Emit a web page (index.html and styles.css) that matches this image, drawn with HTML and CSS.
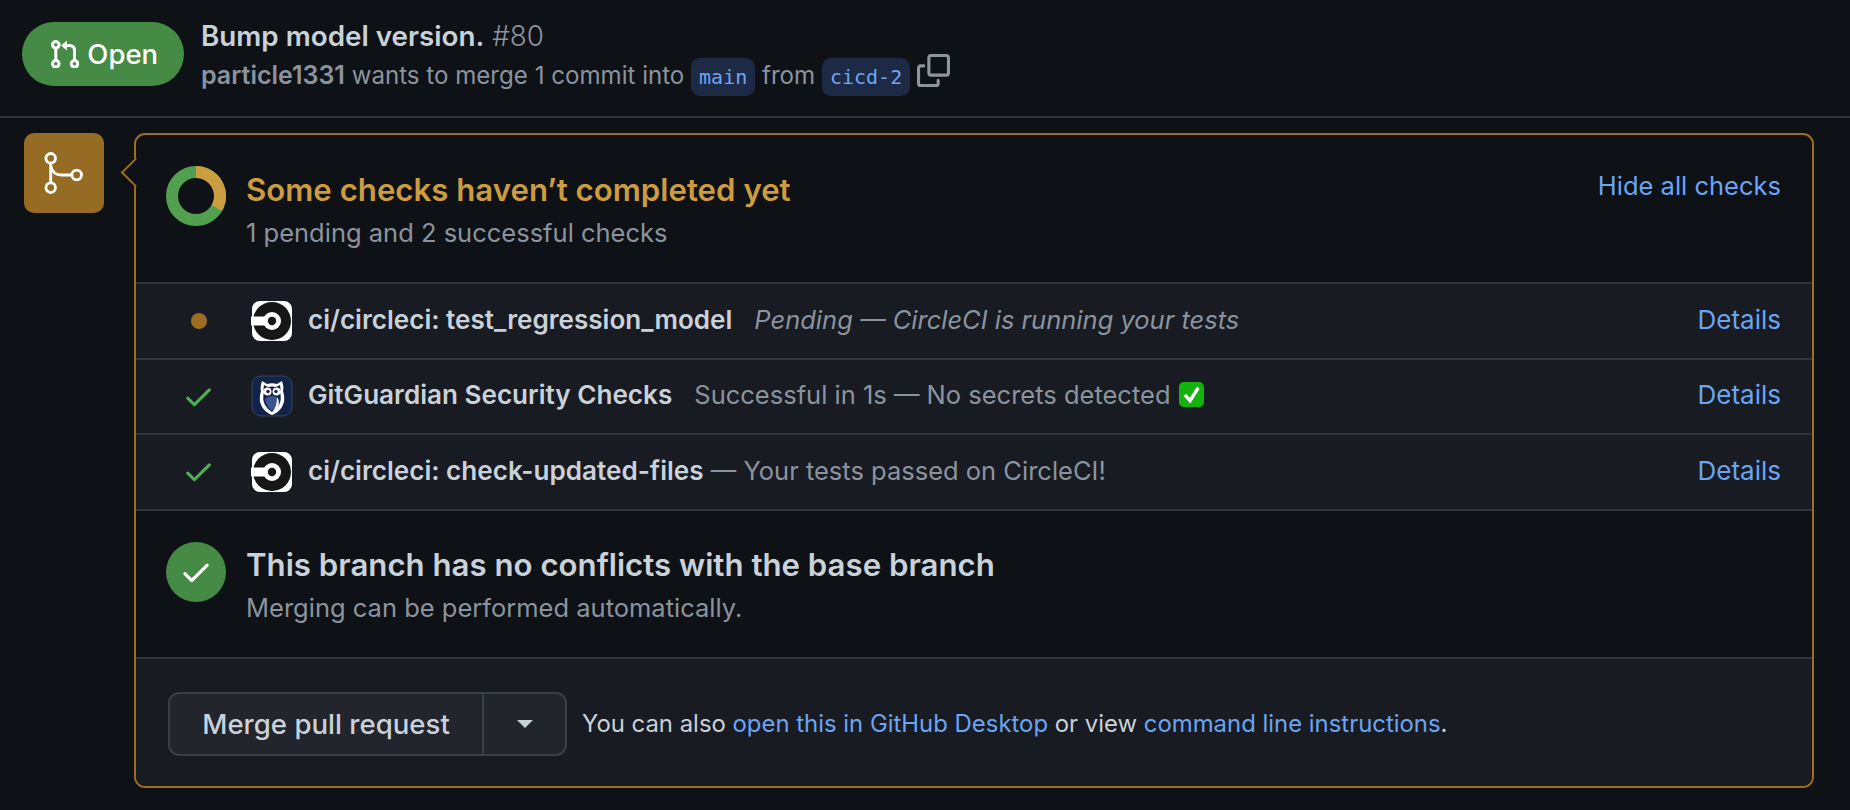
FILE: index.html
```html
<!DOCTYPE html>
<html lang="en">
<head>
  <meta charset="UTF-8">
  <title>Bump model version. #80</title>
  <link rel="stylesheet" href="styles.css">
</head>
<body>
<svg class="defs" width="0" height="0">
  <symbol id="check" viewBox="0 0 16 16"><path fill-rule="evenodd" d="M13.78 4.22a.75.75 0 0 1 0 1.06l-7.25 7.25a.75.75 0 0 1-1.06 0L2.22 9.28a.751.751 0 0 1 .018-1.042.751.751 0 0 1 1.042-.018L6 10.94l6.72-6.72a.75.75 0 0 1 1.06 0Z"/></symbol>
  <symbol id="circleci" viewBox="0 0 42 42">
    <rect x="1" y="1" width="40" height="40" rx="8" fill="#fff"/>
    <circle cx="21" cy="21" r="19" fill="#161616"/>
    <rect x="0" y="16.500" width="15" height="9" fill="#fff"/>
    <circle cx="21" cy="21" r="9" fill="#fff"/>
    <circle cx="21" cy="21" r="4.200" fill="#161616"/>
  </symbol>
</svg>
<header class="pr-header">
  <div class="state-badge">
    <svg class="state-icon" viewBox="9.500 9.500 28.500 28.500">
      <circle cx="14.300" cy="14.300" r="3.300"/>
      <circle cx="14.300" cy="33.300" r="3.300"/>
      <circle cx="33" cy="33.300" r="3.300"/>
      <path d="M14.300 18v11.500M33 29.500V20q0-5-5-5h-4"/>
      <path class="arrow-head" d="M25.500 10L19.500 15l6 5z"/>
    </svg>
    <span>Open</span>
  </div>
  <div class="pr-meta">
    <div class="pr-title"><strong>Bump model version.</strong> <span class="pr-number">#80</span></div>
    <div class="pr-sub">
      <strong>particle1331</strong> wants to merge 1 commit into <code class="branch">main</code> from <code class="branch">cicd-2</code>
      <svg class="copy-icon" viewBox="0 0 16 16"><path d="M0 6.75C0 5.784.784 5 1.75 5h1.5a.75.75 0 0 1 0 1.5h-1.5a.25.25 0 0 0-.25.25v7.5c0 .138.112.25.25.25h7.5a.25.25 0 0 0 .25-.25v-1.5a.75.75 0 0 1 1.5 0v1.5A1.75 1.75 0 0 1 9.25 16h-7.5A1.75 1.75 0 0 1 0 14.25Z"/><path fill-rule="evenodd" d="M5 1.75C5 .784 5.784 0 6.75 0h7.5C15.216 0 16 .784 16 1.75v7.5A1.75 1.75 0 0 1 14.25 11h-7.5A1.75 1.75 0 0 1 5 9.25Zm1.75-.25a.25.25 0 0 0-.25.25v7.5c0 .138.112.25.25.25h7.5a.25.25 0 0 0 .25-.25v-7.5a.25.25 0 0 0-.25-.25Z"/></svg>
    </div>
  </div>
</header>

<main class="merge-section">
  <div class="merge-icon">
    <svg viewBox="0 0 44 44">
      <circle cx="8.700" cy="7.300" r="4.800"/>
      <circle cx="8.700" cy="36.700" r="4.800"/>
      <circle cx="34.700" cy="24" r="4.800"/>
      <path d="M8.700 12v20M8.700 15q2 9 11 9h10"/>
    </svg>
  </div>
  <section class="merge-box">
    <span class="box-arrow"></span>
    <div class="summary">
      <svg class="donut" viewBox="0 0 60 60">
        <circle cx="30" cy="30" r="24" fill="none" stroke="#51a04f" stroke-width="12"/>
        <path d="M30 6A24 24 0 0 1 50.800 42" fill="none" stroke="#cb9d41" stroke-width="12"/>
      </svg>
      <div class="summary-text">
        <h3 class="heading pending">Some checks haven’t completed yet</h3>
        <p class="note">1 pending and 2 successful checks</p>
      </div>
      <a class="link hide-link">Hide all checks</a>
    </div>

    <div class="check-row">
      <span class="status"><span class="dot"></span></span>
      <svg class="app-logo"><use href="#circleci"/></svg>
      <div class="check-text"><strong>ci/circleci: test_regression_model</strong><em class="check-desc spaced">Pending — CircleCI is running your tests</em></div>
      <a class="link">Details</a>
    </div>
    <div class="check-row">
      <span class="status"><svg class="tick"><use href="#check"/></svg></span>
      <svg class="app-logo" viewBox="0 0 42 42">
        <rect x="1" y="1" width="40" height="40" rx="9" fill="#12234a" stroke="#39435c"/>
        <path d="M11 6l5 3q5-1.500 10 0l5-3q2 6 1 10q3 9-1 16q-4 6-10 8q-6-2-10-8q-4-7-1-16q-1-4 1-10z" fill="#fff"/>
        <path d="M13 10l4 2q4-1 8 0l4-2q1 4 0 7q2 7-1 13q-3 5-7 7q-4-2-7-7q-3-6-1-13q-1-3 0-7z" fill="#12234a"/>
        <path d="M14 24q7-6 14 0q1 6-3 11h-5q-5-4-6-11z" fill="#3e5690"/>
        <path d="M21 37q5-4 5-15q3 5 1 10q-2 4-6 5z" fill="#fff"/>
        <circle cx="16.500" cy="16.500" r="4" fill="#fff"/><circle cx="25.500" cy="16.500" r="4" fill="#fff"/>
        <circle cx="17" cy="16.500" r="1.700" fill="#12234a"/><circle cx="25" cy="16.500" r="1.700" fill="#12234a"/>
      </svg>
      <div class="check-text"><strong>GitGuardian Security Checks</strong><span class="check-desc spaced">Successful in 1s — No secrets detected</span><svg class="emoji" viewBox="0 0 26 26"><rect width="26" height="26" rx="5" fill="#14b20c"/><path d="M6 13.500l5.500 6L20 6" fill="none" stroke="#fff" stroke-width="3.500"/></svg></div>
      <a class="link">Details</a>
    </div>
    <div class="check-row">
      <span class="status"><svg class="tick"><use href="#check"/></svg></span>
      <svg class="app-logo"><use href="#circleci"/></svg>
      <div class="check-text"><strong>ci/circleci: check-updated-files</strong><span class="check-desc"> — Your tests passed on CircleCI!</span></div>
      <a class="link">Details</a>
    </div>

    <div class="conflicts">
      <span class="ok-circle"><svg viewBox="0 0 16 16"><use href="#check"/></svg></span>
      <div class="summary-text">
        <h3 class="heading">This branch has no conflicts with the base branch</h3>
        <p class="note">Merging can be performed automatically.</p>
      </div>
    </div>

    <div class="merge-actions">
      <div class="btn-group">
        <button class="btn btn-main">Merge pull request</button>
        <button class="btn btn-caret"><span class="caret"></span></button>
      </div>
      <p class="alt-text">You can also <a class="link">open this in GitHub Desktop</a> or view <a class="link">command line instructions</a>.</p>
    </div>
  </section>
</main>
</body>
</html>
```

FILE: styles.css
```css
html, body {
  margin: 0;
  height: 100%;
  background: #0e1116;
  color: #c9d1d9;
  font-family: Inter, "Noto Sans", sans-serif;
  font-size: 25.5px;
}
.defs {
  position: absolute;
}
h3, p {
  margin: 0;
}
strong {
  font-weight: 600;
}
.link {
  color: #6aa5f3;
  text-decoration: none;
}

/* header */
.pr-header {
  display: flex;
  gap: 17px;
  height: 118px;
  box-sizing: border-box;
  padding: 22px 22px 0;
  border-bottom: 2px solid #30343b;
}
.state-badge {
  display: flex;
  align-items: center;
  justify-content: center;
  gap: 8px;
  width: 162px;
  height: 64px;
  box-sizing: border-box;
  padding-left: 3px;
  border-radius: 32px;
  background: #468b45;
  color: #fff;
  font-size: 27.5px;
  font-weight: 500;
}
.state-icon {
  width: 28.5px;
  height: 28.5px;
  fill: none;
  stroke: #fff;
  stroke-width: 3;
}
.arrow-head {
  fill: #fff;
  stroke: none;
}
.pr-title {
  margin-top: -3px;
  font-size: 27.8px;
  line-height: 34px;
}
.pr-number {
  color: #8b949e;
  font-weight: 300;
}
.pr-sub {
  height: 37px;
  margin-top: 1px;
  color: #8b949e;
  font-size: 24.1px;
  line-height: 37px;
  white-space: nowrap;
}
.pr-sub strong {
  font-size: 25px;
}
.branch {
  padding: 7px 8px;
  border-radius: 9px;
  background: #1c2a45;
  color: #6ea5f5;
  font-family: "DejaVu Sans Mono", monospace;
  font-size: 20px;
}
.copy-icon {
  width: 33px;
  height: 33px;
  fill: #8f959c;
  vertical-align: -3px;
}

/* merge box */
.merge-section {
  display: flex;
  align-items: flex-start;
  gap: 30px;
  padding: 15px 36px 0 24px;
}
.merge-icon {
  display: flex;
  align-items: center;
  justify-content: center;
  flex: none;
  width: 80px;
  height: 80px;
  border-radius: 10px;
  background: #966c25;
}
.merge-icon svg {
  width: 44px;
  height: 44px;
  fill: none;
  stroke: #fff;
  stroke-width: 2.800;
}
.merge-box {
  position: relative;
  flex: 1;
  border: 2px solid #9e6d20;
  border-radius: 11px;
}
.box-arrow {
  position: absolute;
  left: -11px;
  top: 27px;
  width: 19px;
  height: 19px;
  background: #0e1116;
  border-left: 2px solid #9e6d20;
  border-bottom: 2px solid #9e6d20;
  transform: rotate(45deg);
}
.summary {
  display: flex;
  gap: 20px;
  height: 147px;
  box-sizing: border-box;
  padding: 31px 31px 0 30px;
}
.donut {
  flex: none;
  width: 60px;
  height: 60px;
}
.summary-text {
  flex: 1;
  padding-top: 4px;
}
.heading {
  font-size: 31.2px;
  font-weight: 600;
  line-height: 40px;
}
.heading.pending {
  color: #cc9c3f;
}
.note {
  margin-top: 7px;
  color: #8b949e;
  line-height: 32px;
}
.hide-link {
  margin-top: 4px;
}

/* check rows */
.check-row {
  display: flex;
  align-items: center;
  height: 73.5px;
  padding-right: 31px;
  border-top: 2px solid #30343b;
  background: #181b22;
}
.check-row .link {
  margin-bottom: 3px;
  font-size: 26px;
}
.status {
  display: flex;
  justify-content: center;
  flex: none;
  width: 100px;
  padding-left: 26px;
  box-sizing: border-box;
  margin-right: 15px;
}
.dot {
  width: 16px;
  height: 16px;
  border-radius: 50%;
  background: #9e6d20;
}
.tick {
  width: 33px;
  height: 33px;
  margin-left: -2px;
  fill: #4fae56;
}
.app-logo {
  flex: none;
  width: 42px;
  height: 42px;
  margin-right: 15px;
}
.check-text {
  display: flex;
  align-items: center;
  flex: 1;
  padding-bottom: 3px;
  white-space: pre;
}
.check-text strong {
  font-size: 26.1px;
}
.check-desc {
  color: #8b949e;
}
.spaced {
  margin-left: 22px;
}
.emoji {
  width: 25px;
  height: 25px;
  margin-left: 8px;
}

/* conflicts */
.conflicts {
  display: flex;
  gap: 20px;
  height: 148px;
  box-sizing: border-box;
  padding: 31px 31px 0 30px;
  border-top: 2px solid #30343b;
}
.conflicts .summary-text {
  padding-top: 3px;
}
.ok-circle {
  display: flex;
  align-items: center;
  justify-content: center;
  flex: none;
  width: 60px;
  height: 60px;
  border-radius: 50%;
  background: #468b45;
}
.ok-circle svg {
  width: 34px;
  height: 34px;
  fill: #fff;
}

/* actions */
.merge-actions {
  display: flex;
  align-items: center;
  gap: 15px;
  height: 124px;
  padding: 3px 0 0 32px;
  border-top: 2px solid #30343b;
  background: #181b22;
  border-radius: 0 0 9px 9px;
}
.btn-group {
  display: flex;
  height: 64px;
  box-sizing: border-box;
  border: 2px solid #3a3e46;
  border-radius: 11px;
  background: #22252c;
}
.btn {
  padding: 0;
  border: 0;
  background: none;
  color: #c9d1d9;
  font-family: inherit;
  font-weight: 500;
  font-size: 27.6px;
}
.btn-main {
  width: 314px;
  border-right: 2px solid #3a3e46;
}
.btn-caret {
  display: flex;
  align-items: center;
  justify-content: center;
  width: 81px;
}
.caret {
  border-top: 8px solid #c9d1d9;
  border-left: 8px solid transparent;
  border-right: 8px solid transparent;
}
.alt-text {
  font-size: 23.9px;
}
```
